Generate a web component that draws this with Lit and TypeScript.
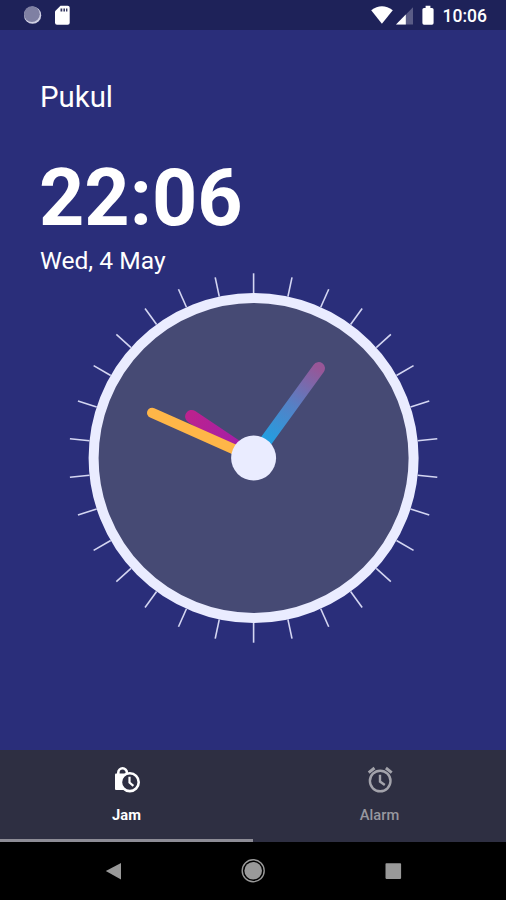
import { LitElement, html, svg, css } from "lit";
import { customElement } from "lit/decorators.js";

@customElement("status-bar")
class StatusBar extends LitElement {
  static styles = css`
    :host { display: flex; align-items: center; height: 30px; background: #1e2259; color: #fff; box-sizing: border-box; }
    svg { display: block; }
    .time { padding: 2px 19px 0 8px; font: 500 17.5px/30px Roboto, "Liberation Sans", sans-serif; }
    .left { margin-left: 23px; }
    .right { margin-left: auto; }
  `;
  render() {
    return html`
      <svg class="left" width="48" height="30" viewBox="0 0 48 30">
        <circle cx="9.6" cy="15.2" r="8.6" fill="#d0d0e4" />
        <circle cx="8.9" cy="14.2" r="7.9" fill="#7f80a3" />
        <path d="M37.5 5.8h7.2q2 0 2 2v15q0 2-2 2H34q-2 0-2-2V11.3z" fill="#fff" />
        <path d="M37.5 8.4h1.8v3h-1.8zM40.4 8.4h1.6v3h-1.6zM43 8.4h1.4v3H43z" fill="#33365f" />
      </svg>
      <svg class="right" width="64" height="30" viewBox="0 0 64 30">
        <path d="M0.2 10.2Q10.9 2.2 21.8 10.2L10.9 23.8z" fill="#fff" />
        <path d="M42 7.3V24.4H25z" fill="#5a5c86" />
        <path d="M34.8 14.4V24.4H25z" fill="#fff" />
        <path d="M54.6 5.8h4.8v2.2h1.6q1.6 0 1.6 1.6V23q0 1.8-1.6 1.8h-8Q51.4 24.8 51.4 23V9.6Q51.4 8 53 8h1.6z" fill="#fff" />
      </svg>
      <span class="time">10:06</span>
    `;
  }
}

@customElement("clock-face")
class ClockFace extends LitElement {
  static styles = css`
    :host { display: block; width: 372px; height: 372px; }
    svg { display: block; }
  `;
  render() {
    const ticks = Array.from({ length: 30 }, (_, i) => i * 12);
    return html`
      <svg width="372" height="372" viewBox="-185.6 -186 372 372">
        <defs>
          <linearGradient id="minute" gradientUnits="userSpaceOnUse" x1="12" y1="-16" x2="65.5" y2="-90">
            <stop offset="0" stop-color="#20a0e2" />
            <stop offset="0.5" stop-color="#5680c5" />
            <stop offset="1" stop-color="#985697" />
          </linearGradient>
          <linearGradient id="hour" gradientUnits="userSpaceOnUse" x1="-15" y1="-10" x2="-62" y2="-42">
            <stop offset="0" stop-color="#a31fa8" />
            <stop offset="1" stop-color="#bb228f" />
          </linearGradient>
        </defs>
        <circle r="160" fill="#464a74" stroke="#eaecff" stroke-width="10" />
        ${ticks.map((a) => svg`<path d="M0-184.7V-165" stroke="#d4d6f2" stroke-width="1.6" transform="rotate(${a})" />`)}
        <path d="M0 0L-62-41.5" stroke="url(#hour)" stroke-width="13" stroke-linecap="round" />
        <path d="M0 0L65.1-89.7" stroke="url(#minute)" stroke-width="12.5" stroke-linecap="round" />
        <path d="M0 0L-101.4-45.1" stroke="#ffb648" stroke-width="10.3" stroke-linecap="round" />
        <circle r="22.5" fill="#eaecff" />
      </svg>
    `;
  }
}

@customElement("app-root")
class AppRoot extends LitElement {
  static styles = css`
    :host { display: flex; flex-direction: column; width: 506px; height: 900px; background: #2a2e7a; color: #fff; font-family: Roboto, "Liberation Sans", sans-serif; overflow: hidden; }
    main { flex: 1; min-height: 0; padding-top: 49px; box-sizing: border-box; display: flex; flex-direction: column; }
    h1 { margin: 0 0 0 40px; font-size: 29.4px; line-height: 36px; font-weight: 400; }
    .time { margin: 35px 0 0 39px; font-size: 79px; line-height: 96px; font-weight: 700; }
    .date { margin: 0 0 0 40px; font-size: 24.6px; line-height: 30px; }
    clock-face { margin: -4px 0 0 68px; }
    .tabs { display: grid; grid-template-columns: 1fr 1fr; height: 92px; background: #2e2f42; }
    .tab { display: flex; flex-direction: column; align-items: center; box-sizing: border-box; padding-top: 15px; font-size: 14.7px; line-height: 20px; font-weight: 500; color: #97979f; border-bottom: 3px solid transparent; }
    .tab svg { margin-bottom: 12px; }
    .tab.active { color: #fff; font-weight: 700; font-size: 14.7px; border-bottom-color: #8d8c96; }
    svg { display: block; }
    .nav { display: flex; justify-content: center; height: 58px; background: #000; }
  `;
  render() {
    return html`
      <status-bar></status-bar>
      <main>
        <h1>Pukul</h1>
        <div class="time">22:06</div>
        <div class="date">Wed, 4 May</div>
        <clock-face></clock-face>
      </main>
      <div class="tabs">
        <div class="tab active">
          <svg width="28" height="28" viewBox="0 0 28 28">
            <path d="M5.3 9.5V7.6a4.3 4.3 0 0 1 8.6 0V9.5" fill="none" stroke="#fff" stroke-width="2.6" />
            <path d="M3 8.5H17V25H3Q2 25 2 24V9.5Q2 8.5 3 8.5z" fill="#fff" />
            <circle cx="16.8" cy="17.2" r="8.9" fill="#2e2f42" stroke="#fff" stroke-width="2.6" />
            <path d="M16.5 11.7V17.6L20.4 20.8" fill="none" stroke="#fff" stroke-width="2.2" />
          </svg>
          <span>Jam</span>
        </div>
        <div class="tab">
          <svg width="28" height="28" viewBox="0 0 28 28" fill="none" stroke="#a3a3ab" stroke-width="2.4">
            <circle cx="14.2" cy="16" r="10.3" />
            <path d="M14 9.8V16.6L18.8 20" />
            <path d="M2.7 7.7L8.5 3M25.7 7.7L19.9 3" stroke-width="2.9" />
          </svg>
          <span>Alarm</span>
        </div>
      </div>
      <div class="nav">
        <svg width="506" height="58" viewBox="0 0 506 58">
          <path d="M105.8 29L121 21V37.5z" fill="#999" />
          <circle cx="253.2" cy="28.7" r="8.8" fill="#999" />
          <circle cx="253.2" cy="28.7" r="11" fill="none" stroke="#999" stroke-width="1.4" />
          <rect x="385.5" y="21.3" width="15.6" height="15.6" rx="0.8" fill="#999" />
        </svg>
      </div>
    `;
  }
}
